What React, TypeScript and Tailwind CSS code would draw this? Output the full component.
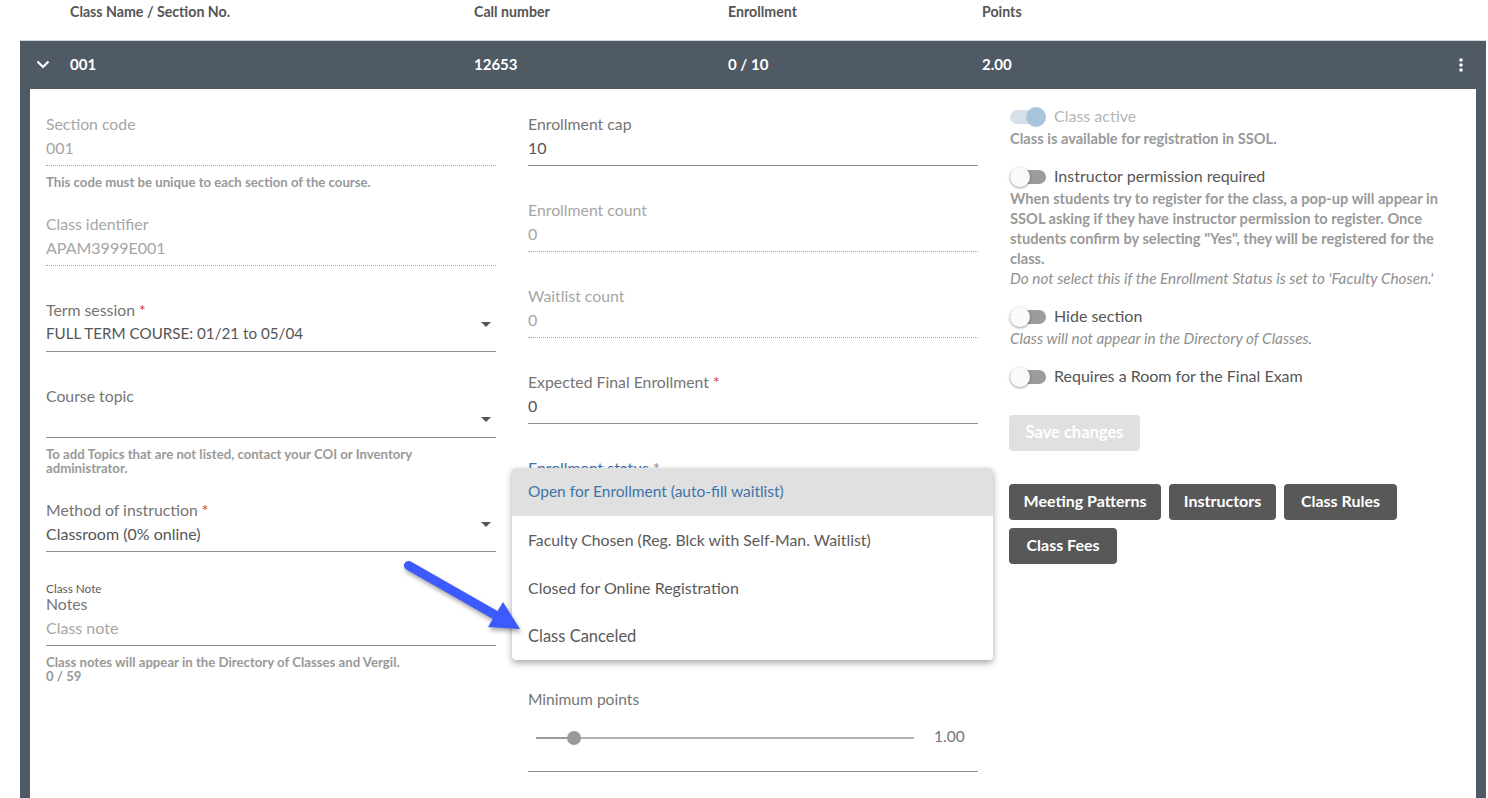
import React from "react";

const Caret = ({ className }: { className: string }) => (
  <svg className={`absolute right-[5px] ${className}`} width="10" height="5" viewBox="0 0 10 5">
    <path d="M0 0h10L5 5z" fill="#555555" />
  </svg>
);

type FieldProps = {
  label: string;
  value?: string;
  required?: boolean;
  disabled?: boolean;
  select?: boolean;
  emptySelect?: boolean;
  placeholder?: boolean;
  caps?: boolean;
  className?: string;
};

function Field({ label, value, required, disabled, select, emptySelect, placeholder, caps, className = "" }: FieldProps) {
  return (
    <div
      className={`relative h-[54px] pb-[5px] border-b text-[16px] leading-[23px] ${
        disabled ? "border-dotted border-[#a8a8a8]" : "border-[#8c8c8c]"
      } ${className}`}
    >
      <div className={`h-[24px] text-[15.8px] ${disabled ? "text-[#a6a6a6]" : "text-[#757575]"}`}>
        {label}
        {required && <span className="text-[#d33a3a]"> *</span>}
      </div>
      <div
        className={`h-[24px] ${caps ? "text-[15.2px]" : ""} ${
          disabled || placeholder ? "text-[#a6a6a6]" : "text-[#555555]"
        }`}
      >
        {value}
      </div>
      {select && <Caret className="bottom-[24px]" />}
      {emptySelect && <Caret className="bottom-[15px]" />}
    </div>
  );
}

const Help = ({ children, className = "" }: { children: React.ReactNode; className?: string }) => (
  <div className={`text-[13.2px] leading-[14px] font-bold text-[#999999] ${className}`}>{children}</div>
);

function Toggle({ label, on }: { label: string; on?: boolean }) {
  return (
    <div className="flex items-center h-[24px]">
      <div className={`relative w-[36px] h-[14px] rounded-full ${on ? "bg-[#d5e0ea]" : "bg-[#9c9c9c]"}`}>
        <div
          className={`absolute top-[-3px] w-[20px] h-[20px] rounded-full ${
            on ? "left-[16px] bg-[#a9c4dd]" : "left-0 bg-[#fafafa] shadow-[0_1px_3px_rgba(0,0,0,0.4)]"
          }`}
        />
      </div>
      <span className={`ml-[8px] pb-[2px] text-[16px] leading-[22px] ${on ? "text-[#b5b5b5]" : "text-[#555555]"}`}>
        {label}
      </span>
    </div>
  );
}

const RightHelp = ({ children }: { children: React.ReactNode }) => (
  <div className="text-[14.65px] leading-[20px] font-bold text-[#999999]">{children}</div>
);

const Italic = ({ children }: { children: React.ReactNode }) => (
  <div className="text-[15.3px] leading-[19px] pb-[1px] italic text-[#8f8f8f]">{children}</div>
);

const Btn = ({ children, className }: { children: React.ReactNode; className: string }) => (
  <div
    className={`h-[36px] pb-[2px] flex items-center justify-center rounded-[4px] bg-[#585858] text-white text-[16px] font-bold ${className}`}
  >
    {children}
  </div>
);

export default function App() {
  return (
    <div className="h-[798px] w-[1488px] overflow-hidden bg-white relative font-['Lato','Liberation_Sans',sans-serif]">
      {/* Column titles */}
      <div className="h-[40px] pl-[70px] pb-[16px] flex items-center text-[14.2px] font-bold text-[#555555]">
        <div className="w-[404px]">Class Name / Section No.</div>
        <div className="w-[254px]">Call number</div>
        <div className="w-[254px]">Enrollment</div>
        <div>Points</div>
      </div>

      <div className="mx-[20px] w-[1466px] border-t border-[#d8d8d8] bg-[#505a65]">
        {/* Section bar */}
        <div className="h-[48px] pb-[1px] flex items-center text-white text-[15px] font-bold">
          <div className="w-[50px] flex justify-center pr-[4px]">
            <svg width="14" height="9" viewBox="0 0 14 9" fill="none">
              <path d="M1.5 1.5L7 7l5.5-5.5" stroke="#fff" strokeWidth="2.2" />
            </svg>
          </div>
          <div className="w-[404px]">001</div>
          <div className="w-[254px]">12653</div>
          <div className="w-[254px]">0 / 10</div>
          <div className="flex-1">2.00</div>
          <div className="w-[50px] flex justify-center">
            <svg width="4" height="14" viewBox="0 0 4 14" fill="#fff">
              <circle cx="2" cy="2" r="1.8" />
              <circle cx="2" cy="7" r="1.8" />
              <circle cx="2" cy="12" r="1.8" />
            </svg>
          </div>
        </div>

        {/* Panel */}
        <div className="mx-[10px] h-[720px] bg-white pt-[23px] pl-[16px] flex gap-[32px]">
          {/* Left column */}
          <div className="w-[450px] shrink-0">
            <Field label="Section code" value="001" disabled />
            <Help className="mt-[9px]">This code must be unique to each section of the course.</Help>
            <Field label="Class identifier" value="APAM3999E001" disabled className="mt-[23px]" />
            <Field label="Term session" required value="FULL TERM COURSE: 01/21 to 05/04" caps select className="mt-[32px]" />
            <Field label="Course topic" emptySelect className="mt-[32px]" />
            <Help className="mt-[9px]">
              To add Topics that are not listed, contact your COI or Inventory
              <br />
              administrator.
            </Help>
            <Field label="Method of instruction" required value="Classroom (0% online)" select className="mt-[23px]" />
            <div className="relative mt-[40px]">
              <div className="absolute top-[-7px] left-0 text-[11.8px] leading-[8px] text-[#5a5a5a]">Class Note</div>
              <Field label="Notes" value="Class note" placeholder />
            </div>
            <Help className="mt-[9px]">
              Class notes will appear in the Directory of Classes and Vergil.
              <br />
              0 / 59
            </Help>
          </div>

          {/* Middle column */}
          <div className="w-[450px] shrink-0 relative">
            <Field label="Enrollment cap" value="10" />
            <Field label="Enrollment count" value="0" disabled className="mt-[32px]" />
            <Field label="Waitlist count" value="0" disabled className="mt-[32px]" />
            <Field label="Expected Final Enrollment" required value="0" className="mt-[32px]" />
            <div className="mt-[32px] h-[54px] text-[15.8px] leading-[23px] text-[#3f74a8]">
              Enrollment status <span className="text-[#8a8a8a]">*</span>
            </div>
            <div className="mt-[178px] h-[24px] text-[15.6px] leading-[23px] text-[#757575]">Minimum points</div>
            <div className="h-[60px] pt-[13px] border-b border-[#8c8c8c]">
              <div className="h-[24px] flex items-center pl-[8px]">
                <div className="relative w-[378px] h-[2px] bg-[#b3b3b3] mt-[2px]">
                  <div className="absolute left-0 top-0 h-[2px] w-[38px] bg-[#9a9a9a]" />
                  <div className="absolute left-[31px] top-[-6px] w-[14px] h-[14px] rounded-full bg-[#9a9a9a]" />
                </div>
                <span className="ml-[20px] text-[15.5px] text-[#757575]">1.00</span>
              </div>
            </div>

            {/* Dropdown menu */}
            <div className="absolute left-[-16px] top-[356px] w-[481px] rounded-[4px] bg-white shadow-[0_3px_7px_rgba(0,0,0,0.35)] overflow-hidden text-[16px] text-[#5a5a5a]">
              <div className="h-[48px] flex items-center pl-[16px] bg-[#e0e0e0] text-[15.5px] text-[#3f74a8]">
                Open for Enrollment (auto-fill waitlist)
              </div>
              <div className="h-[48px] pb-[1px] flex items-center pl-[16px] text-[15.8px]">Faculty Chosen (Reg. Blck with Self-Man. Waitlist)</div>
              <div className="h-[48px] pb-[1px] flex items-center pl-[16px]">Closed for Online Registration</div>
              <div className="h-[48px] flex items-center pl-[16px] text-[16.5px]">Class Canceled</div>
            </div>
          </div>

          {/* Right column */}
          <div className="w-[440px] shrink-0 mt-[-7px]">
            <Toggle label="Class active" on />
            <RightHelp>Class is available for registration in SSOL.</RightHelp>
            <div className="mt-[16px]">
              <Toggle label="Instructor permission required" />
              <RightHelp>
                When students try to register for the class, a pop-up will appear in SSOL asking if they have instructor
                permission to register. Once students confirm by selecting "Yes", they will be registered for the class.
              </RightHelp>
              <Italic>Do not select this if the Enrollment Status is set to 'Faculty Chosen.'</Italic>
            </div>
            <div className="mt-[16px]">
              <Toggle label="Hide section" />
              <Italic>Class will not appear in the Directory of Classes.</Italic>
            </div>
            <div className="mt-[16px]">
              <Toggle label="Requires a Room for the Final Exam" />
            </div>
            <div className="mt-[26px] ml-[-1px] w-[131px] h-[36px] pb-[1px] flex items-center justify-center rounded-[4px] bg-[#e0e0e0] text-white text-[16.5px] font-bold">
              Save changes
            </div>
            <div className="mt-[33px] ml-[-1px] flex flex-wrap gap-[8px] w-[400px]">
              <Btn className="w-[152px]">Meeting Patterns</Btn>
              <Btn className="w-[107px]">Instructors</Btn>
              <Btn className="w-[113px]">Class Rules</Btn>
              <Btn className="w-[108px]">Class Fees</Btn>
            </div>
          </div>
        </div>
      </div>

      {/* Annotation arrow */}
      <svg
        className="absolute left-[396px] top-[552px] drop-shadow-[1px_3px_2px_rgba(0,0,0,0.35)]"
        width="130"
        height="84"
        viewBox="396 552 130 84"
      >
        <path d="M408.5 565.5L497 616" stroke="#3d5afe" strokeWidth="9" strokeLinecap="round" />
        <path d="M520 629L503 602L488 627z" fill="#3d5afe" />
      </svg>
    </div>
  );
}
